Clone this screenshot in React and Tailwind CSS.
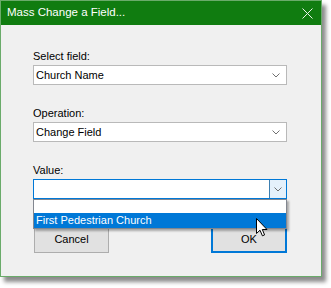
import React from 'react'

const FONT = { fontFamily: '"Segoe UI", "Liberation Sans", Arial, sans-serif' }

function Chevron({ className = '' }) {
  return (
    <svg width="8" height="5" viewBox="0 0 8 5" className={className}>
      <path d="M0.5 0.5 L4 4 L7.5 0.5" fill="none" stroke="#707070" strokeWidth="1" />
    </svg>
  )
}

function Combo({ value, focused }) {
  if (focused) {
    return (
      <div className="h-[20px] w-[254px] border border-[#0078d7] bg-white flex items-stretch">
        <div className="flex-1" />
        <div className="w-[17px] bg-[#e5f1fb] border-l border-[#3c7fb1] flex items-center justify-center">
          <Chevron />
        </div>
      </div>
    )
  }
  return (
    <div className="h-[20px] w-[254px] border border-[#b9b9b9] bg-white flex items-center pl-[2px] pr-[6px]">
      <span className="flex-1 text-[11px] leading-none text-black">{value}</span>
      <Chevron />
    </div>
  )
}

function Cursor() {
  return (
    <svg width="12" height="19" viewBox="0 0 12 19" className="absolute left-[256px] top-[218px] z-20">
      <path
        d="M0.5 0.5 L0.5 15.5 L4 12.2 L6.4 17.8 L8.6 16.9 L6.3 11.5 L11 11.5 Z"
        fill="white"
        stroke="black"
        strokeWidth="1"
        strokeLinejoin="round"
      />
    </svg>
  )
}

export default function App() {
  return (
    <div className="w-[331px] h-[288px] bg-white relative overflow-hidden" style={FONT}>
      <div className="w-[322px] h-[277px] border border-[#6aab6a] bg-[#f0f0f0] shadow-[4px_5px_4px_rgba(0,0,0,0.45)] flex flex-col">
        <div className="h-[24px] bg-[#107c10] flex items-center justify-between pl-[6px] pr-[8px] shrink-0">
          <span className="text-white text-[11.5px]">Mass Change a Field...</span>
          <svg width="11" height="11" viewBox="0 0 11 11">
            <path d="M0.5 0.5 L10.5 10.5 M10.5 0.5 L0.5 10.5" stroke="#e8f2e8" strokeWidth="1" />
          </svg>
        </div>
        <div className="relative flex-1 pl-[32px] pt-[24px]">
          <div className="flex flex-col gap-[21px]">
            <div className="flex flex-col">
              <span className="h-[16px] text-[11px] leading-[14px] text-black">Select field:</span>
              <Combo value="Church Name" />
            </div>
            <div className="flex flex-col">
              <span className="h-[16px] text-[11px] leading-[14px] text-black">Operation:</span>
              <Combo value="Change Field" />
            </div>
            <div className="flex flex-col">
              <span className="h-[16px] text-[11px] leading-[14px] text-black">Value:</span>
              <Combo focused />
            </div>
          </div>
          <div className="flex justify-between w-[254px] mt-[27px] pl-[1px]">
            <button className="w-[75px] h-[27px] bg-[#e1e1e1] border border-[#adadad] text-[11px] text-black">
              Cancel
            </button>
            <button className="w-[76px] h-[27px] bg-[#e1e1e1] border-2 border-[#0078d7] text-[11px] text-black">
              OK
            </button>
          </div>
          <div className="absolute left-[32px] top-[174px] w-[254px] bg-white border border-[#828790] shadow-[2px_2px_2px_rgba(0,0,0,0.3)] z-10">
            <div className="h-[13px]" />
            <div className="h-[15px] bg-[#0078d7] text-white text-[11px] leading-[15px] pl-[2px]">
              First Pedestrian Church
            </div>
          </div>
        </div>
      </div>
      <Cursor />
    </div>
  )
}
